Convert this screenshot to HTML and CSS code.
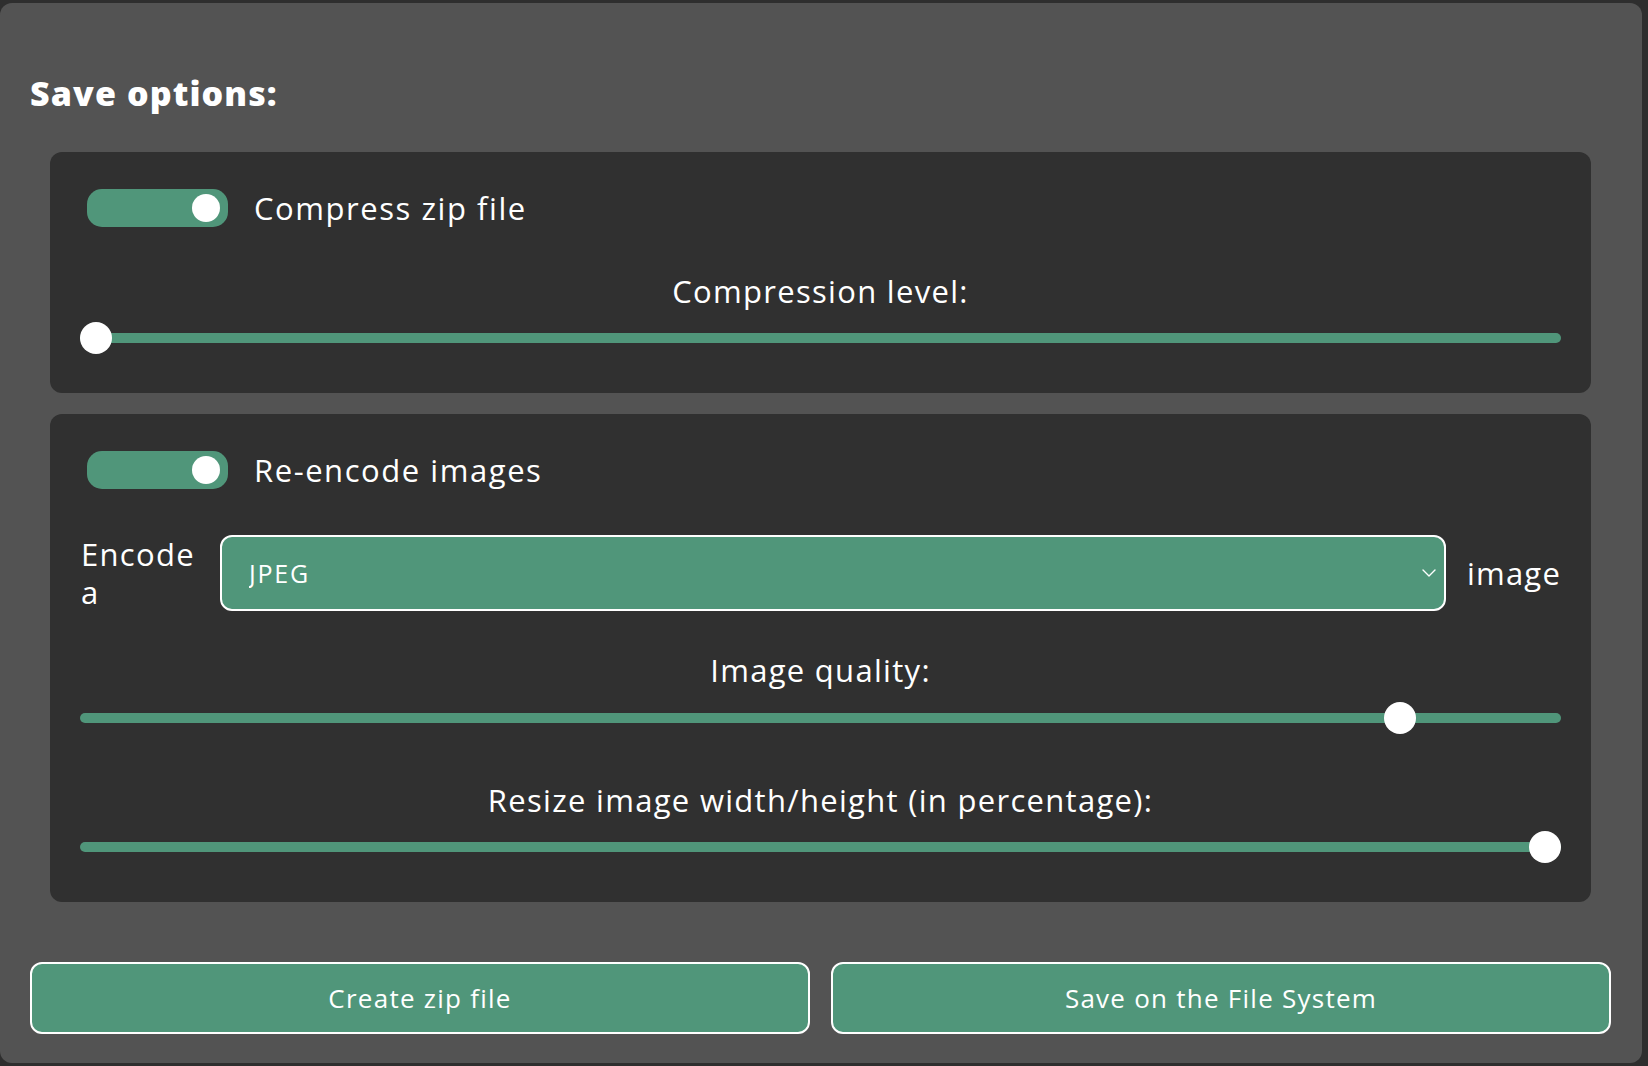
FILE: index.html
```html
<!DOCTYPE html>
<html lang="en">
<head>
<meta charset="utf-8">
<title>Save options</title>
<link rel="stylesheet" href="styles.css">
</head>
<body>
<main class="panel">
  <h2 class="title">Save options:</h2>

  <section class="card">
    <div class="switch-row">
      <span class="switch"><span class="knob"></span></span>
      <span class="switch-label">Compress zip file</span>
    </div>
    <div class="field-label first">Compression level:</div>
    <input class="range" type="range" min="0" max="100" value="0">
  </section>

  <section class="card">
    <div class="switch-row">
      <span class="switch"><span class="knob"></span></span>
      <span class="switch-label">Re-encode images</span>
    </div>
    <div class="encode-row">
      <span class="encode-label">Encode a</span>
      <div class="select-wrap">
        <select class="select">
          <option>JPEG</option>
          <option>PNG</option>
          <option>WEBP</option>
        </select>
        <svg class="chevron" width="14" height="8" viewBox="0 0 14 8"><path d="M1 1l6 6 6-6" fill="none" stroke="#fff" stroke-width="1.4" stroke-linecap="round" stroke-linejoin="round"/></svg>
      </div>
      <span class="encode-suffix">image</span>
    </div>
    <div class="field-label quality">Image quality:</div>
    <input class="range" type="range" min="0" max="100" value="90">
    <div class="field-label resize">Resize image width/height (in percentage):</div>
    <input class="range" type="range" min="0" max="100" value="100">
  </section>

  <div class="actions">
    <button class="btn">Create zip file</button>
    <button class="btn">Save on the File System</button>
  </div>
</main>
</body>
</html>
```

FILE: styles.css
```css
* { box-sizing: border-box; }

html, body {
  margin: 0;
  padding: 0;
  background: #2e2e2e;
}

body {
  font-family: "Open Sans", "Noto Sans", "Liberation Sans", sans-serif;
  color: #ffffff;
  padding-top: 3px;
  letter-spacing: 1.4px;
}

.panel {
  width: 1642px;
  height: 1060px;
  background: #535353;
  border-radius: 12px;
  padding: 0 31px 0 30px;
  display: flex;
  flex-direction: column;
}

.title {
  margin: 70px 0 39px 0;
  font-size: 34px;
  line-height: 40px;
  font-weight: 800;
  letter-spacing: 1.1px;
}

.card {
  margin: 0 20px 21px 20px;
  background: #303030;
  border-radius: 12px;
  padding: 37px 30px 39px 30px;
  display: flex;
  flex-direction: column;
}

.switch-row {
  display: flex;
  align-items: center;
  gap: 26px;
  padding-left: 7px;
  height: 38px;
}

.switch {
  width: 141px;
  height: 38px;
  border-radius: 15px;
  background: #50967a;
  display: flex;
  align-items: center;
  justify-content: flex-end;
  padding-right: 8px;
  flex: none;
}

.knob {
  width: 28px;
  height: 28px;
  border-radius: 50%;
  background: #ffffff;
}

.switch-label {
  font-size: 31px;
  line-height: 38px;
  letter-spacing: 1.55px;
}

.field-label {
  text-align: center;
  font-size: 31px;
  line-height: 38px;
  letter-spacing: 1.3px;
}

.field-label.first { margin-top: 45px; margin-bottom: 12px; }
.field-label.quality { margin-top: 40px; margin-bottom: 13px; }
.field-label.resize { margin-top: 47px; margin-bottom: 12px; }

.range {
  -webkit-appearance: none;
  appearance: none;
  display: block;
  width: 100%;
  height: 32px;
  margin: 0;
  background: transparent;
}

.range::-webkit-slider-runnable-track {
  height: 10px;
  border-radius: 5px;
  background: #50967a;
}

.range::-webkit-slider-thumb {
  -webkit-appearance: none;
  appearance: none;
  width: 32px;
  height: 32px;
  margin-top: -11px;
  border: none;
  border-radius: 50%;
  background: #ffffff;
}

.encode-row {
  display: flex;
  align-items: center;
  margin-top: 46px;
}

.encode-label {
  width: min-content;
  font-size: 31px;
  line-height: 38px;
  flex: none;
  margin: 0 25px 0 1px;
  letter-spacing: 1.3px;
}

.select-wrap {
  position: relative;
  flex: 1 1 auto;
}

.select {
  -webkit-appearance: none;
  appearance: none;
  display: block;
  width: 100%;
  height: 76px;
  border: 2px solid #ffffff;
  border-radius: 12px;
  background: #50967a;
  color: #ffffff;
  font-family: inherit;
  font-size: 25px;
  letter-spacing: 1.8px;
  padding: 0 40px 0 27px;
  outline: none;
}

.chevron {
  position: absolute;
  right: 10px;
  top: 34px;
  pointer-events: none;
}

.encode-suffix {
  font-size: 31px;
  line-height: 38px;
  flex: none;
  margin-left: 21px;
  letter-spacing: 1.2px;
}

.actions {
  margin-top: 39px;
  display: flex;
  gap: 21px;
}

.btn {
  flex: 1 1 0;
  height: 72px;
  border: 2px solid #ffffff;
  border-radius: 12px;
  background: #50967a;
  color: #ffffff;
  font-family: inherit;
  font-size: 26px;
  letter-spacing: 1.25px;
  cursor: pointer;
}
```
